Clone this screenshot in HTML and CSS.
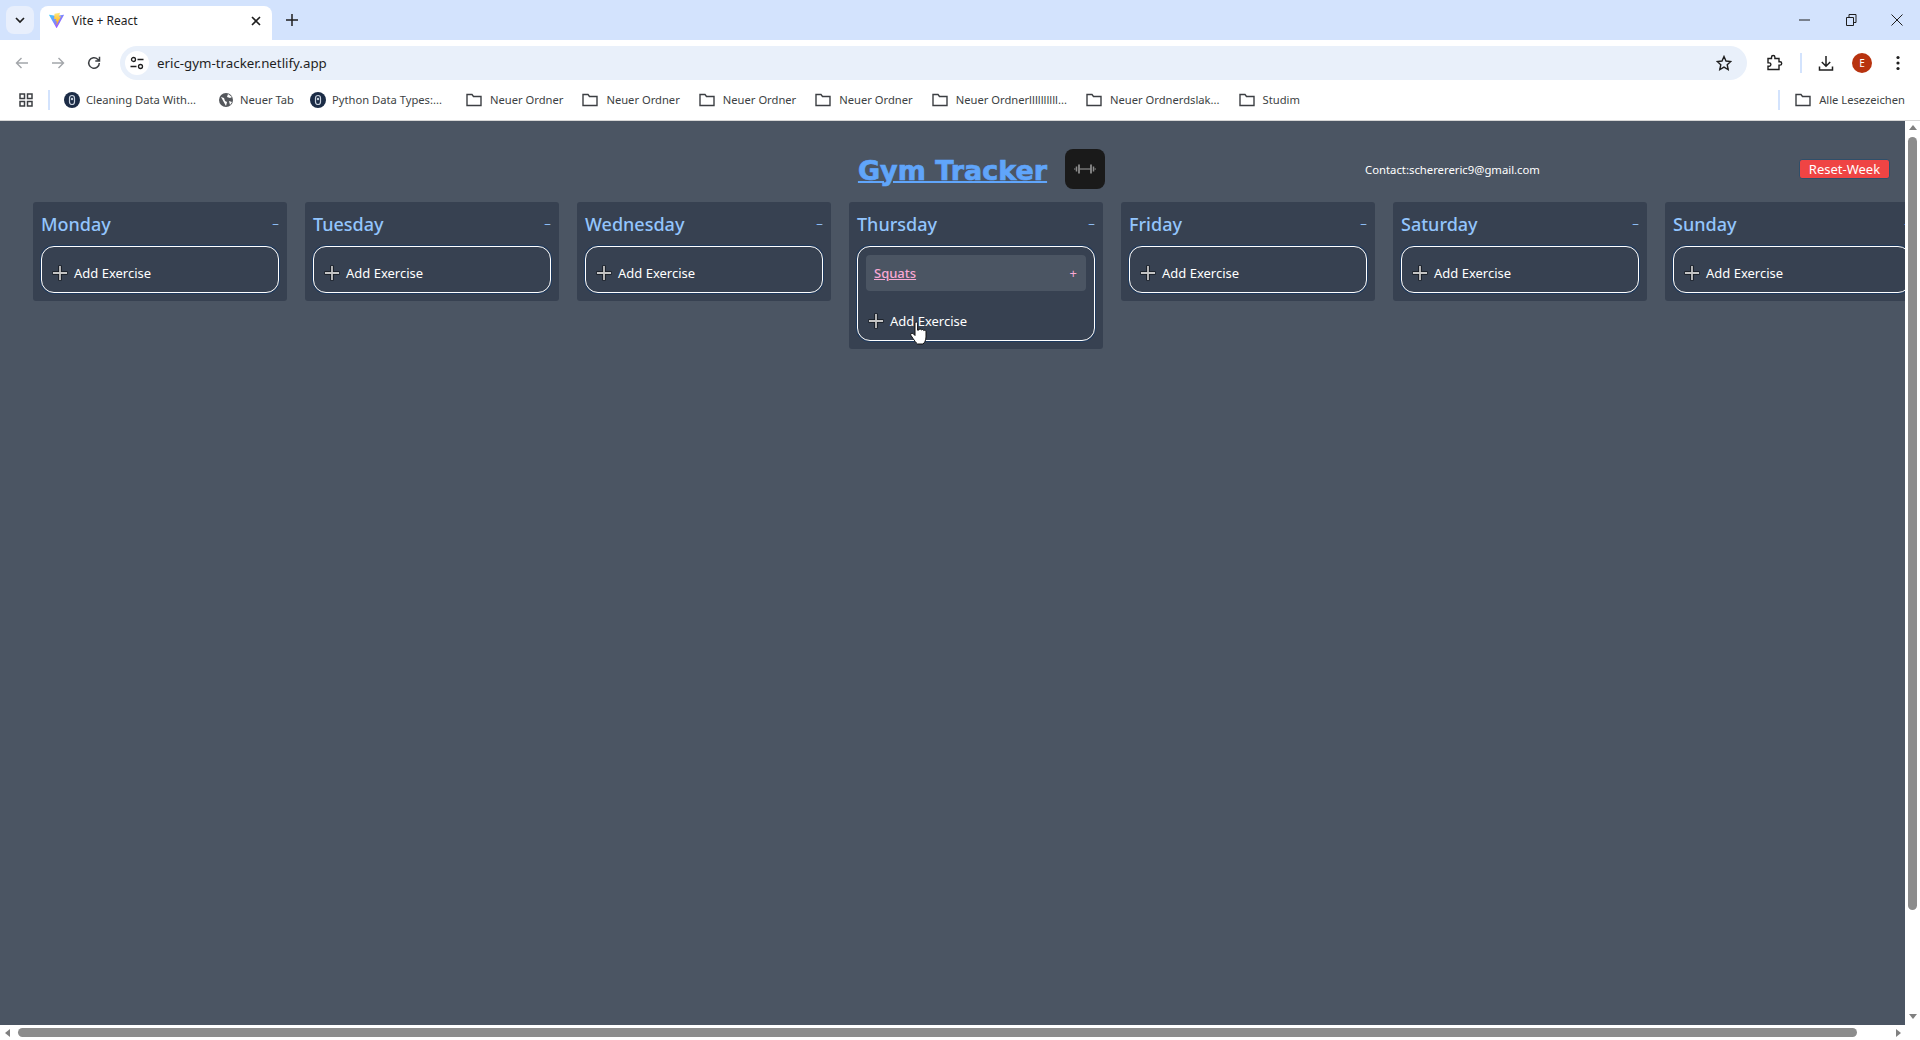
FILE: index.html
```html
<!DOCTYPE html>
<html lang="en">
<head>
    <meta charset="UTF-8">
    <title>Vite + React</title>
    <link rel="stylesheet" href="styles.css">
</head>
<body>
    <div class="tabstrip">
        <div class="tabsearch">
            <svg width="12" height="12" viewBox="0 0 12 12"><path d="M2 4l4 4 4-4" fill="none" stroke="#1f1f1f" stroke-width="1.7"/></svg>
        </div>
        <div class="tab">
            <svg class="favicon" width="17" height="17" viewBox="0 0 32 32">
                <defs>
                    <linearGradient id="viteA" x1="0" y1="0" x2="1" y2="1"><stop offset="0" stop-color="#41d1ff"/><stop offset="1" stop-color="#bd34fe"/></linearGradient>
                    <linearGradient id="viteB" x1="0" y1="0" x2="0" y2="1"><stop offset="0" stop-color="#ffea83"/><stop offset="1" stop-color="#ffa800"/></linearGradient>
                </defs>
                <path fill="url(#viteA)" d="M29.883 6.146 16.8 29.541a.711.711 0 0 1-1.239.005L2.22 6.148a.711.711 0 0 1 .741-1.054l13.096 2.34a.71.71 0 0 0 .253 0l12.822-2.337a.711.711 0 0 1 .75 1.05Z"/>
                <path fill="url(#viteB)" d="M22.2 1.24 12.5 3.1a.36.36 0 0 0-.29.33l-.6 10.06a.36.36 0 0 0 .44.37l2.7-.62a.36.36 0 0 1 .43.42l-.8 3.92a.36.36 0 0 0 .45.42l1.67-.5a.36.36 0 0 1 .45.42l-1.27 6.17c-.08.39.43.6.64.27l.14-.22 7.88-15.72a.36.36 0 0 0-.39-.51l-2.77.53a.36.36 0 0 1-.41-.45l1.81-6.27a.36.36 0 0 0-.41-.45Z"/>
            </svg>
            <span class="tab-title">Vite + React</span>
            <svg width="12" height="12" viewBox="0 0 12 12"><path d="M2 2l8 8M10 2l-8 8" stroke="#1f1f1f" stroke-width="1.6"/></svg>
        </div>
        <svg class="newtab" width="14" height="14" viewBox="0 0 14 14"><path d="M7 1v12M1 7h12" stroke="#1f1f1f" stroke-width="1.5"/></svg>
        <div class="winbtns">
            <svg width="14" height="14" viewBox="0 0 14 14"><path d="M1 7h11" stroke="#1f1f1f" stroke-width="1"/></svg>
            <svg width="14" height="14" viewBox="0 0 14 14"><path d="M2.5 4.5h7v8h-7zM5 4.500V1.500h7v8h-2.500" fill="none" stroke="#1f1f1f" stroke-width="1"/></svg>
            <svg width="14" height="14" viewBox="0 0 14 14"><path d="M1.500 1.500l11 11M12.500 1.500l-11 11" stroke="#1f1f1f" stroke-width="1"/></svg>
        </div>
    </div>

    <div class="toolbar">
        <div class="nav-icons">
            <svg width="16" height="16" viewBox="0 0 16 16"><path d="M14 8H2.500M7.500 3l-5 5 5 5" fill="none" stroke="#a3a6aa" stroke-width="1.400"/></svg>
            <svg width="16" height="16" viewBox="0 0 16 16"><path d="M2 8h11.500M8.500 3l5 5-5 5" fill="none" stroke="#a3a6aa" stroke-width="1.400"/></svg>
            <svg width="16" height="16" viewBox="0 0 16 16"><path d="M13.300 8a5.300 5.300 0 1 1-1.600-3.800L13.500 6M13.500 1.800V6H9.300" fill="none" stroke="#3c3f43" stroke-width="1.500"/></svg>
        </div>
        <div class="omnibox">
            <div class="siteinfo">
                <svg width="16" height="16" viewBox="0 0 16 16"><g fill="none" stroke="#1f1f1f" stroke-width="1.300"><circle cx="4.500" cy="4.500" r="2"/><circle cx="11.500" cy="11.500" r="2"/><path d="M8.500 4.500h6M1.500 11.500h6"/></g></svg>
            </div>
            <span class="url">eric-gym-tracker.netlify.app</span>
            <svg class="star" width="16" height="16" viewBox="0 0 16 16"><path d="M8 1.500l2 4.500 4.800.5-3.600 3.200 1 4.800L8 12.100l-4.200 2.400 1-4.800L1.200 6.500 6 6z" fill="none" stroke="#1f1f1f" stroke-width="1.400"/></svg>
        </div>
        <div class="actions">
            <svg width="18" height="18" viewBox="0 0 18 18"><path d="M3 4.500h3.500V3.200a1.700 1.700 0 0 1 3.400 0v1.300H14v3.200h1a1.700 1.700 0 0 1 0 3.400h-1v4.400H3v-3.200h1.200a1.700 1.700 0 0 0 0-3.400H3z" fill="none" stroke="#1f1f1f" stroke-width="1.400"/></svg>
            <span class="sep"></span>
            <svg width="18" height="18" viewBox="0 0 18 18"><path d="M9 2v10M4.800 8L9 12.200 13.200 8M2.500 12.500V16h13v-3.500" fill="none" stroke="#1f1f1f" stroke-width="1.500"/></svg>
            <span class="avatar">E</span>
            <svg width="6" height="18" viewBox="0 0 6 18"><g fill="#1f1f1f"><circle cx="3" cy="3.500" r="1.600"/><circle cx="3" cy="9" r="1.600"/><circle cx="3" cy="14.500" r="1.600"/></g></svg>
        </div>
    </div>

    <div class="bookmarks">
        <svg class="apps" width="14" height="14" viewBox="0 0 14 14"><g fill="none" stroke="#3c3f43" stroke-width="1.500"><rect x="1" y="1" width="4.500" height="4.500"/><rect x="8.500" y="1" width="4.500" height="4.500"/><rect x="1" y="8.500" width="4.500" height="4.500"/><rect x="8.500" y="8.500" width="4.500" height="4.500"/></g></svg>
        <span class="sep bm-sep"></span>
        <div class="bm bm-site bm-wide">
            <svg width="16" height="16" viewBox="0 0 16 16"><circle cx="8" cy="8" r="8" fill="#1c2c46"/><rect x="5.500" y="3.500" width="5" height="9" rx="2.500" fill="none" stroke="#c9d2de" stroke-width="1.200"/><circle cx="8" cy="7" r="1.200" fill="#c9d2de"/></svg>
            <span>Cleaning Data With...</span>
        </div>
        <div class="bm bm-site bm-tight">
            <svg width="16" height="16" viewBox="0 0 16 16"><circle cx="8" cy="8" r="7" fill="#54575c"/><path d="M3 5l3 1 1 3 2 1-1 4M10 2l-1 3 3 1 2-1M11 9l3 1-2 3z" fill="#fff"/></svg>
            <span>Neuer Tab</span>
        </div>
        <div class="bm bm-site bm-wider">
            <svg width="16" height="16" viewBox="0 0 16 16"><circle cx="8" cy="8" r="8" fill="#1c2c46"/><rect x="5.500" y="3.500" width="5" height="9" rx="2.500" fill="none" stroke="#c9d2de" stroke-width="1.200"/><circle cx="8" cy="7" r="1.200" fill="#c9d2de"/></svg>
            <span>Python Data Types:...</span>
        </div>
        <div class="bm"><svg class="folder" width="16" height="16" viewBox="0 0 16 16"><use href="#folder"/></svg><span>Neuer Ordner</span></div>
        <div class="bm"><svg class="folder" width="16" height="16" viewBox="0 0 16 16"><use href="#folder"/></svg><span>Neuer Ordner</span></div>
        <div class="bm"><svg class="folder" width="16" height="16" viewBox="0 0 16 16"><use href="#folder"/></svg><span>Neuer Ordner</span></div>
        <div class="bm"><svg class="folder" width="16" height="16" viewBox="0 0 16 16"><use href="#folder"/></svg><span>Neuer Ordner</span></div>
        <div class="bm"><svg class="folder" width="16" height="16" viewBox="0 0 16 16"><use href="#folder"/></svg><span>Neuer Ordnerllllllllll...</span></div>
        <div class="bm"><svg class="folder" width="16" height="16" viewBox="0 0 16 16"><use href="#folder"/></svg><span>Neuer Ordnerdslak...</span></div>
        <div class="bm"><svg class="folder" width="16" height="16" viewBox="0 0 16 16"><use href="#folder"/></svg><span>Studim</span></div>
        <div class="bm-right">
            <span class="sep"></span>
            <div class="bm"><svg class="folder" width="16" height="16" viewBox="0 0 16 16"><use href="#folder"/></svg><span>Alle Lesezeichen</span></div>
        </div>
    </div>

    <svg class="defs" width="0" height="0"><defs>
        <path id="folder" d="M1 13.500V2.500h5l1.500 2H15v9z" fill="none" stroke="#3c3f43" stroke-width="1.400"/>
        <g id="plus">
            <path d="M8 .5v15M.5 8h15" stroke="#15191f" stroke-width="3.500"/>
            <path d="M8 1v14M1 8h14" stroke="#c4c4c4" stroke-width="1.800"/>
        </g>
    </defs></svg>

    <div class="viewport">
        <main class="page">
            <header class="top">
                <div></div>
                <h1 class="brand">Gym Tracker</h1>
                <div class="top-right">
                    <button class="tile">
                        <svg width="22" height="12" viewBox="0 0 22 12"><g stroke="#8b8b8b" fill="none"><path d="M5 6h12" stroke-width="1.200"/><path d="M5 1.500v9M17 1.500v9" stroke-width="1.800"/><path d="M2.500 3.500v5M19.500 3.500v5" stroke-width="1.500"/><path d="M0 6h1.500M20.500 6H22" stroke-width="1"/></g></svg>
                    </button>
                    <span class="contact">Contact:scherereric9@gmail.com</span>
                    <button class="reset">Reset-Week</button>
                </div>
            </header>

            <section class="week">
                <div class="day">
                    <div class="day-head"><h2>Monday</h2><span class="collapse">−</span></div>
                    <div class="panel"><div class="add"><svg class="plus" width="16" height="16" viewBox="0 0 16 16"><use href="#plus"/></svg>Add Exercise</div></div>
                </div>
                <div class="day">
                    <div class="day-head"><h2>Tuesday</h2><span class="collapse">−</span></div>
                    <div class="panel"><div class="add"><svg class="plus" width="16" height="16" viewBox="0 0 16 16"><use href="#plus"/></svg>Add Exercise</div></div>
                </div>
                <div class="day">
                    <div class="day-head"><h2>Wednesday</h2><span class="collapse">−</span></div>
                    <div class="panel"><div class="add"><svg class="plus" width="16" height="16" viewBox="0 0 16 16"><use href="#plus"/></svg>Add Exercise</div></div>
                </div>
                <div class="day">
                    <div class="day-head"><h2>Thursday</h2><span class="collapse">−</span></div>
                    <div class="panel">
                        <div class="exercise"><span class="ex-name">Squats</span><span class="ex-plus">+</span></div>
                        <div class="add"><svg class="plus" width="16" height="16" viewBox="0 0 16 16"><use href="#plus"/></svg>Add Exercise</div>
                        <svg class="cursor" width="18" height="24" viewBox="0 0 18 24"><path d="M5 2.200c0-1.600 2.600-1.600 2.600 0v7l1.400-.3c.3-1.300 2.200-1.100 2.400.2 .5-1 2.200-.8 2.400.5 .7-.7 2.200-.3 2.200 1V16c0 3-1.500 6-3 7H7.500c-1.500-1-3-3.500-4.500-5.500L1 14.500c-1-1.500.8-3 2.200-1.800L5 14.500z" fill="#fff" stroke="#111" stroke-width="1"/></svg>
                    </div>
                </div>
                <div class="day">
                    <div class="day-head"><h2>Friday</h2><span class="collapse">−</span></div>
                    <div class="panel"><div class="add"><svg class="plus" width="16" height="16" viewBox="0 0 16 16"><use href="#plus"/></svg>Add Exercise</div></div>
                </div>
                <div class="day">
                    <div class="day-head"><h2>Saturday</h2><span class="collapse">−</span></div>
                    <div class="panel"><div class="add"><svg class="plus" width="16" height="16" viewBox="0 0 16 16"><use href="#plus"/></svg>Add Exercise</div></div>
                </div>
                <div class="day">
                    <div class="day-head"><h2>Sunday</h2><span class="collapse">−</span></div>
                    <div class="panel"><div class="add"><svg class="plus" width="16" height="16" viewBox="0 0 16 16"><use href="#plus"/></svg>Add Exercise</div></div>
                </div>
            </section>
        </main>
        <div class="vbar">
            <span class="arrow-up"></span>
            <span class="vthumb"></span>
            <span class="arrow-down"></span>
        </div>
    </div>
    <div class="hbar">
        <span class="arrow-left"></span>
        <span class="hthumb"></span>
        <span class="arrow-right"></span>
    </div>
</body>
</html>
```

FILE: styles.css
```css
* {
    box-sizing: border-box;
}
html, body {
    height: 100%;
    margin: 0;
    overflow: hidden;
}
body {
    display: flex;
    flex-direction: column;
    font-family: "Noto Sans", "Liberation Sans", sans-serif;
    background: #fff;
}
h1, h2 {
    margin: 0;
}
button {
    font-family: inherit;
    border: none;
    padding: 0;
}
.defs {
    position: absolute;
}

/* browser chrome */
.tabstrip {
    height: 40px;
    flex: none;
    display: flex;
    align-items: flex-end;
    background: #d3e3fd;
    padding-left: 6px;
}
.tabsearch {
    width: 28px;
    height: 28px;
    margin-bottom: 6px;
    border-radius: 8px;
    background: #e8effc;
    display: flex;
    align-items: center;
    justify-content: center;
}
.tab {
    width: 232px;
    height: 34px;
    margin-left: 6px;
    padding: 0 10px 5px 8px;
    background: #fff;
    border-radius: 8px 8px 0 0;
    display: flex;
    align-items: center;
    gap: 7px;
    font-size: 12px;
    color: #1f1f1f;
}
.tab-title {
    flex: 1;
}
.newtab {
    margin: 0 0 13px 13px;
}
.winbtns {
    margin-left: auto;
    align-self: stretch;
    display: flex;
    align-items: center;
    gap: 32px;
    padding: 0 16px 0 0;
}
.toolbar {
    height: 40px;
    flex: none;
    display: flex;
    padding: 6px 0 0 14px;
    background: #fff;
    border-radius: 8px 8px 0 0;
}
.nav-icons {
    display: flex;
    align-items: center;
    gap: 20px;
    width: 106px;
}
.omnibox {
    width: 1627px;
    height: 34px;
    display: flex;
    align-items: center;
    padding: 0 15px 0 5px;
    border-radius: 17px;
    background: #e9f0fa;
    font-size: 13.300px;
    color: #1f1f1f;
}
.siteinfo {
    width: 24px;
    height: 24px;
    border-radius: 50%;
    background: #fff;
    display: flex;
    align-items: center;
    justify-content: center;
}
.url {
    margin-left: 8px;
    flex: 1;
}
.actions {
    display: flex;
    align-items: center;
    padding-left: 18px;
}
.sep {
    display: block;
    width: 2px;
    height: 20px;
    background: #d3e3fd;
}
.actions .sep {
    margin: 0 15px 0 17px;
}
.avatar {
    width: 20px;
    height: 20px;
    margin: 0 23px 0 17px;
    border-radius: 50%;
    background: #b8330f;
    color: #fff;
    font-size: 10px;
    display: flex;
    align-items: center;
    justify-content: center;
}
.bookmarks {
    height: 41px;
    flex: none;
    display: flex;
    align-items: center;
    padding: 0 15px 1px 19px;
    background: #fff;
    border-bottom: 1px solid #d6d6d6;
    font-size: 11.200px;
    color: #3c3f43;
}
.bm-sep {
    margin: 0 14px 0 15px;
}
.bm {
    display: flex;
    align-items: center;
    gap: 8px;
    margin-right: 19px;
    white-space: nowrap;
}
.bm-site {
    gap: 6px;
}
.bm-wide {
    margin-right: 22px;
}
.bm-tight {
    margin-right: 16px;
}
.bm-wider {
    margin-right: 24px;
}
.bm-right {
    margin-left: auto;
    display: flex;
    align-items: center;
    gap: 15px;
}
.bm-right .bm {
    margin-right: 0;
}

/* the app */
.viewport {
    flex: 1;
    min-height: 0;
    display: flex;
}
.page {
    flex: 1;
    min-width: 0;
    overflow: hidden;
    background: #4b5563;
}
.top {
    height: 81px;
    display: grid;
    grid-template-columns: 1fr auto 1fr;
    align-items: center;
}
.brand {
    font-family: "DejaVu Sans", sans-serif;
    font-size: 27px;
    font-weight: 700;
    color: #60a5fa;
    text-decoration: underline;
    text-decoration-thickness: 2px;
    -webkit-text-stroke: .7px #60a5fa;
    margin-top: 17px;
}
.top-right {
    display: flex;
    align-items: center;
    margin-top: 15px;
    padding: 0 15px 0 18px;
}
.tile {
    width: 40px;
    height: 40px;
    border-radius: 8px;
    background: #1a1a1a;
    display: flex;
    align-items: center;
    justify-content: center;
}
.contact {
    margin-left: 260px;
    font-size: 11.300px;
    color: #fff;
}
.reset {
    margin-left: auto;
    width: 91px;
    height: 20px;
    border-radius: 3px;
    background: #ef4444;
    border: 1px solid #2f4f6a;
    color: #fff;
    font-size: 13px;
}
.week {
    display: flex;
    align-items: flex-start;
    gap: 18px;
    padding-left: 33px;
}
.day {
    flex: none;
    width: 254px;
    padding: 8px;
    background: #374151;
    border-radius: 3px;
}
.day-head {
    height: 36px;
    padding-bottom: 8px;
    display: flex;
    align-items: center;
    justify-content: space-between;
    color: #93c5fd;
}
.day-head h2 {
    font-size: 18px;
    font-weight: 500;
}
.collapse {
    font-size: 12px;
}
.panel {
    position: relative;
    border: 1px solid #fff;
    border-radius: 13px;
    padding: 8px 8px 1px;
    box-shadow: 0 0 0 1px #1e3a5f;
}
.add {
    height: 36px;
    display: flex;
    align-items: center;
    gap: 6px;
    padding-left: 2px;
    font-size: 13px;
    color: #fff;
}
.exercise {
    height: 36px;
    margin-bottom: 12px;
    padding: 0 9px 0 8px;
    display: flex;
    align-items: center;
    justify-content: space-between;
    background: #4b5563;
    border-radius: 4px;
    font-size: 13px;
    color: #f9a8d4;
}
.ex-name {
    font-weight: 500;
    text-decoration: underline;
}
.cursor {
    position: absolute;
    left: 52px;
    top: 74px;
}

/* scrollbars */
.vbar {
    width: 15px;
    flex: none;
    display: flex;
    flex-direction: column;
    align-items: center;
    background: #fff;
    padding: 4px 0 6px;
}
.vthumb {
    width: 9px;
    height: 773px;
    margin: 7px 0 auto;
    border-radius: 5px;
    background: #8c8c8c;
}
.arrow-up {
    border: 4px solid transparent;
    border-top: none;
    border-bottom: 5px solid #808080;
}
.arrow-down {
    border: 4px solid transparent;
    border-bottom: none;
    border-top: 5px solid #808080;
}
.hbar {
    height: 15px;
    flex: none;
    display: flex;
    align-items: center;
    background: #fff;
    padding: 0 19px 0 5px;
}
.hthumb {
    width: 1839px;
    height: 9px;
    margin: 0 auto 0 8px;
    border-radius: 5px;
    background: #8c8c8c;
}
.arrow-left {
    border: 4px solid transparent;
    border-left: none;
    border-right: 5px solid #808080;
}
.arrow-right {
    border: 4px solid transparent;
    border-right: none;
    border-left: 5px solid #808080;
}
```
